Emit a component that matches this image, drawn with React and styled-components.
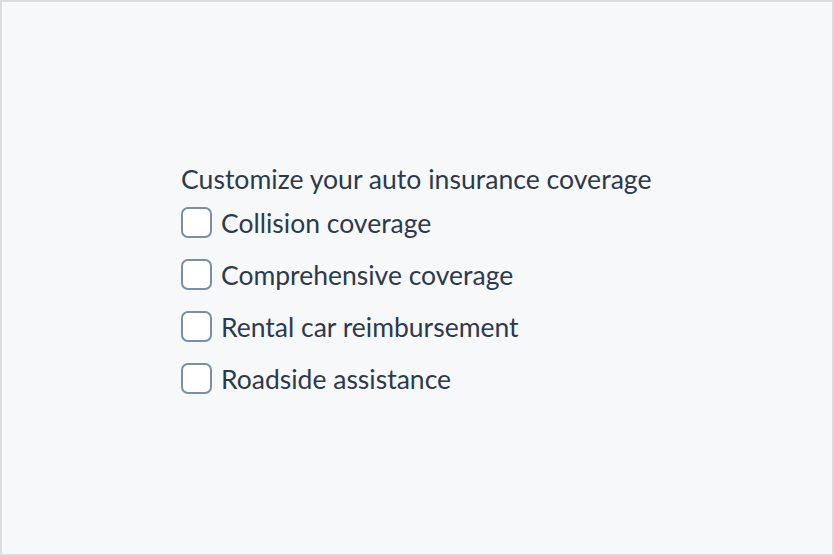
import React from "react";
import styled, { createGlobalStyle } from "styled-components";

const Global = createGlobalStyle`
  html, body { margin: 0; padding: 0; }
  body { background: #f7f8fa; font-family: "Lato", "Noto Sans", sans-serif; }
  * { box-sizing: border-box; }
`;

const Frame = styled.div`
  width: 834px;
  height: 556px;
  border: 2px solid #dcdcdc;
  background: #f7f8fa;
  display: flex;
  align-items: center;
  justify-content: flex-start;
  padding-left: 179px;
`;

const Fieldset = styled.fieldset`
  border: none;
  margin: 0;
  padding: 0;
  display: flex;
  flex-direction: column;
`;

const Legend = styled.legend`
  padding: 0;
  font-size: 26.6px;
  color: #2d3a4a;
  line-height: 32px;
  margin-bottom: 13px;
  float: left;
`;

const Options = styled.div`
  display: flex;
  flex-direction: column;
  gap: 22px;
`;

const Option = styled.label`
  display: flex;
  align-items: center;
  gap: 9px;
  height: 30px;
  font-size: 26.5px;
  color: #2d3a4a;
`;

const Box = styled.input.attrs({ type: "checkbox" })`
  appearance: none;
  margin: 0;
  width: 31px;
  height: 31px;
  border: 2px solid #7a8ea8;
  border-radius: 7px;
  background: #fff;
`;

const items = [
  "Collision coverage",
  "Comprehensive coverage",
  "Rental car reimbursement",
  "Roadside assistance",
];

export default function App() {
  return (
    <>
      <Global />
      <Frame>
        <Fieldset>
          <Legend>Customize your auto insurance coverage</Legend>
          <Options>
            {items.map((t) => (
              <Option key={t}>
                <Box />
                {t}
              </Option>
            ))}
          </Options>
        </Fieldset>
      </Frame>
    </>
  );
}
